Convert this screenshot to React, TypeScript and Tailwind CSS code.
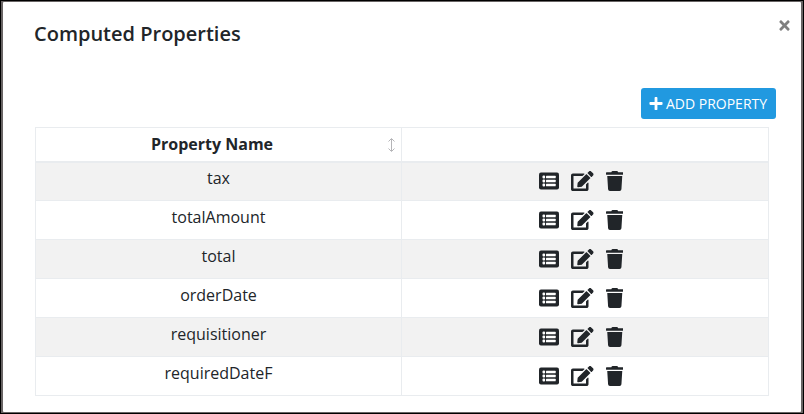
import React from "react";
import { FaTrash, FaEdit, FaPlus, FaTimes } from "react-icons/fa";

const rows = ["tax", "totalAmount", "total", "orderDate", "requisitioner", "requiredDateF"];

function SortIcon() {
  return (
    <svg width="7" height="14" viewBox="0 0 7 14" fill="none" stroke="#b5b5b8" className="relative top-px shrink-0">
      <path d="M3.5 1v12M.5 3.5l3-3 3 3M.5 10.5l3 3 3-3" />
    </svg>
  );
}

function ListIcon() {
  return (
    <svg width="20" height="20" viewBox="0 0 20 20" className="shrink-0">
      <rect y="1.5" width="20" height="17" rx="2" fill="currentColor" />
      <g className="fill-white">
        <rect x="3.5" y="4.6" width="2.6" height="2.9" rx="1" />
        <rect x="3.5" y="8.6" width="2.6" height="2.9" rx="1" />
        <rect x="3.5" y="12.6" width="2.6" height="2.9" rx="1" />
        <rect x="7" y="4.8" width="9.7" height="2.4" rx=".5" />
        <rect x="7" y="8.8" width="9.7" height="2.4" rx=".5" />
        <rect x="7" y="12.8" width="9.7" height="2.4" rx=".5" />
      </g>
    </svg>
  );
}

export default function App() {
  return (
    <div className="h-[414px] w-[804px] overflow-hidden border border-black bg-[#686464] pt-px pr-[2px] pb-px pl-[2px] font-['Open_Sans',sans-serif] text-[#212529]">
      <div className="h-full rounded-[1px] bg-white">
        <div className="flex items-start justify-between pt-[17px] pr-[9px] pl-[31px]">
          <h1 className="text-[20px] leading-[30px] font-semibold">Computed Properties</h1>
          <FaTimes className="mt-[-1px] text-[15px] text-[#7f7f7f]" />
        </div>
        <div className="mt-[39px] flex justify-end pr-[25px]">
          <button className="flex h-[31px] w-[135px] items-center justify-center gap-[3px] rounded-[3px] bg-[#2199e0] pr-px text-[14px] whitespace-nowrap text-white">
            <FaPlus className="h-[15px] w-[14px]" />
            ADD PROPERTY
          </button>
        </div>
        <table className="mt-[8px] ml-[32px] w-[734px] table-fixed border-collapse border border-[#e9ecef] text-center text-[16px]">
          <thead>
            <tr className="h-[34px] border-b-2 border-[#e9ecef]">
              <th className="w-[366px] border-r border-[#e9ecef] p-0 font-bold">
                <div className="flex items-center pr-[6px]">
                  <span className="flex-1">Property Name</span>
                  <SortIcon />
                </div>
              </th>
              <th className="p-0" />
            </tr>
          </thead>
          <tbody>
            {rows.map((name) => (
              <tr key={name} className="h-[39px] border-b border-[#e9ecef] odd:bg-[#f2f2f2]">
                <td className="border-r border-[#e9ecef] p-0 pb-[6px]">{name}</td>
                <td className="p-0 pr-[8px] pb-px">
                  <div className="flex items-center justify-center gap-3">
                    <ListIcon />
                    <FaEdit className="h-5 w-[22.5px]" />
                    <FaTrash className="h-5 w-[17.5px]" />
                  </div>
                </td>
              </tr>
            ))}
          </tbody>
        </table>
      </div>
    </div>
  );
}
